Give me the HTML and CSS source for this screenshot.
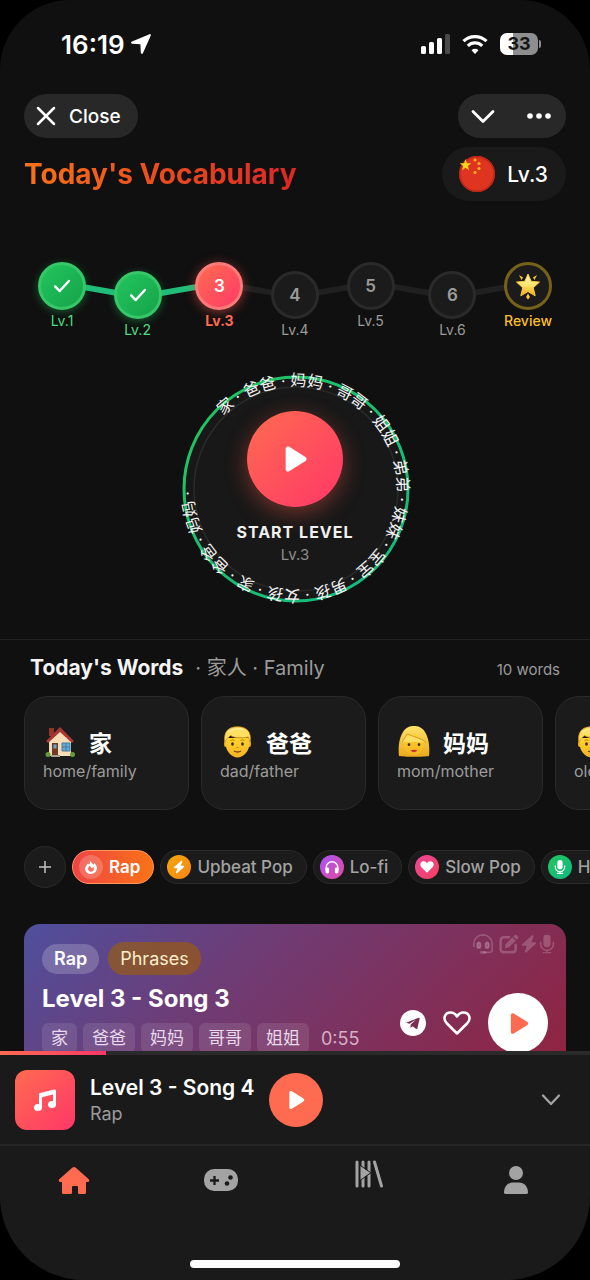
FILE: index.html
```
<!DOCTYPE html>
<html lang="en">

<head>
    <meta charset="utf-8">
    <title>Today's Vocabulary</title>
    <meta name="viewport" content="width=device-width, initial-scale=1">
    <link rel="stylesheet" href="styles.css">
</head>

<body>
    <!-- shared shapes -->
    <svg class="defs" width="0" height="0" aria-hidden="true">
        <defs>
            <linearGradient id="hair" x1="0" y1="0" x2="0" y2="1">
                <stop offset="0" stop-color="#ffe268" />
                <stop offset="1" stop-color="#e9a91c" />
            </linearGradient>
            <linearGradient id="skin" x1="0" y1="0" x2="0" y2="1">
                <stop offset="0" stop-color="#ffd42e" />
                <stop offset="1" stop-color="#f5b324" />
            </linearGradient>
            <linearGradient id="gold" x1="0" y1="0" x2="0" y2="1">
                <stop offset="0" stop-color="#fffce0" />
                <stop offset="0.5" stop-color="#ffe56b" />
                <stop offset="1" stop-color="#f7a51c" />
            </linearGradient>
            <symbol id="play" viewBox="0 0 24 24">
                <path d="M4 3.2v17.6c0 1.6 1.6 2.5 3 1.7l14-8.8c1.3-.8 1.3-2.6 0-3.4L7 1.5C5.600.7 4 1.600 4 3.200z" fill="currentColor" />
            </symbol>
            <symbol id="check" viewBox="0 0 24 24">
                <path d="M4.500 12.500l5 5 10-11" fill="none" stroke="currentColor" stroke-width="2.600" stroke-linecap="round" stroke-linejoin="round" />
            </symbol>
            <symbol id="bolt" viewBox="0 0 24 24">
                <path d="M15.500 1.500L3.500 12.200c-.9.8-.4 2.100.8 2.100h4.900L7 21c-.4 1.400 1 2.200 2 1.300l11.600-10.500c.9-.8.4-2.100-.8-2.100h-4.700l2.500-6.800c.5-1.500-1-2.400-2.100-1.400z" fill="currentColor" />
            </symbol>
            <symbol id="mic" viewBox="0 0 24 24">
                <rect x="7.500" y="0" width="9" height="16" rx="4.500" fill="currentColor" />
                <path d="M4 10v2a8 8 0 0 0 16 0v-2M12 20v3M7.500 23h9" fill="none" stroke="currentColor" stroke-width="2" stroke-linecap="round" />
            </symbol>
            <symbol id="man" viewBox="0 0 34 32">
                <ellipse cx="5.500" cy="18" rx="1.500" ry="3" fill="#eba724" />
                <ellipse cx="29.500" cy="18" rx="1.500" ry="3" fill="#eba724" />
                <path d="M5.500 12h24v5c0 8-6 14.500-12 14.500S5.500 25 5.500 17z" fill="url(#skin)" />
                <path d="M4.800 16C3.500 6 8 .8 17.500.8S31.500 6 30.200 16c-.8-1.500-1.500-3-1.700-5-7 1.500-14 1-18-1.500-2 1.500-4 3.500-5.700 6.500z" fill="#ffe062" stroke="#d9941d" stroke-width="0.8" />
                <path d="M9 6c4-3.500 11-4 15-2" fill="none" stroke="#fff2a0" stroke-width="1.200" />
                <path d="M10.500 14.500q2-1.500 4 0M20.500 14.500q2-1.500 4 0" fill="none" stroke="#b57d17" />
                <ellipse cx="12.500" cy="18" rx="1.400" ry="1.800" fill="#43301a" />
                <ellipse cx="22.500" cy="18" rx="1.400" ry="1.800" fill="#43301a" />
                <path d="M16.500 21.500h2" stroke="#d28c1b" />
                <path d="M14 25q3.500 2 7 0" fill="none" stroke="#74431a" stroke-width="1.400" />
            </symbol>
        </defs>
    </svg>

    <div id="app">
        <div class="status">
            <div class="clock">
                16:19
                <svg width="20" height="20" viewBox="0 0 20 20">
                    <path d="M18.500.2L1 7.600c-1.400.6-1.200 2 .2 2.100l8.200.5.400 8.500c.1 1.400 1.700 1.600 2.200.3L19.700 1.700c.4-1-.2-1.900-1.200-1.500z" fill="#fff" />
                </svg>
            </div>
            <div class="signals">
                <svg width="29" height="20" viewBox="0 0 29 20" fill="#fff">
                    <rect x="0" y="12" width="5" height="8" rx="1.500" />
                    <rect x="8" y="8" width="5" height="12" rx="1.500" />
                    <rect x="16" y="4" width="5" height="16" rx="1.500" />
                    <rect x="24" y="0" width="5" height="20" rx="1.500" fill="#4a4a4a" />
                </svg>
                <svg width="26" height="20" viewBox="0 0 26 20" fill="none" stroke="#fff" stroke-width="3.200">
                    <path d="M1.500 7.200a16.500 16.500 0 0 1 23 0" />
                    <path d="M5.800 11.800a10.400 10.400 0 0 1 14.400 0" />
                    <path d="M13 20l-3.500-3.700a5 5 0 0 1 7 0z" fill="#fff" stroke="none" />
                </svg>
                <div class="battery"><span>33</span></div>
            </div>
        </div>

        <div class="topbar">
            <button class="close">
                <svg width="20" height="20" viewBox="0 0 20 20">
                    <path d="M2 2l16 16M18 2L2 18" stroke="#fff" stroke-width="2.500" stroke-linecap="round" />
                </svg>
                Close
            </button>
            <div class="tools">
                <button aria-label="Minimize">
                    <svg width="24" height="24" viewBox="0 0 24 24">
                        <path d="M2 7.500l10 10 10-10" fill="none" stroke="#fff" stroke-width="2.800" stroke-linecap="round" stroke-linejoin="round" />
                    </svg>
                </button>
                <button aria-label="More">
                    <svg width="24" height="24" viewBox="0 0 24 24" fill="#fff">
                        <circle cx="3" cy="12" r="2.800" />
                        <circle cx="12" cy="12" r="2.800" />
                        <circle cx="21" cy="12" r="2.800" />
                    </svg>
                </button>
            </div>
        </div>

        <header class="heading">
            <h1>Today's Vocabulary</h1>
            <button class="language">
                <svg width="38" height="38" viewBox="0 0 38 38">
                    <circle cx="19" cy="19" r="18" fill="#df3420" />
                    <circle cx="19" cy="19" r="17.200" fill="none" stroke="#b92617" stroke-width="1.500" />
                    <path d="M7.500 4l1.500 4.200 4.300.1-3.400 2.700 1.200 4.200L7.500 12.800 4 15.200l1.200-4.200-3.400-2.700 4.300-.1z" fill="#ffd51d" />
                    <g fill="#ffb91d">
                        <circle cx="17" cy="5" r="1.500" />
                        <circle cx="21" cy="8.500" r="1.500" />
                        <circle cx="21" cy="13.500" r="1.500" />
                        <circle cx="17" cy="17.500" r="1.500" />
                    </g>
                </svg>
                Lv.3
            </button>
        </header>

        <main>
            <div class="levels">
                <div class="level done">
                    <div class="node"><svg width="22" height="22"><use href="#check" /></svg></div>
                    <span>Lv.1</span>
                </div>
                <i class="link down done"></i>
                <div class="level low done">
                    <div class="node"><svg width="22" height="22"><use href="#check" /></svg></div>
                    <span>Lv.2</span>
                </div>
                <i class="link up done wide"></i>
                <div class="level current">
                    <div class="node">3</div>
                    <span>Lv.3</span>
                </div>
                <i class="link down"></i>
                <div class="level low">
                    <div class="node">4</div>
                    <span>Lv.4</span>
                </div>
                <i class="link up"></i>
                <div class="level">
                    <div class="node">5</div>
                    <span>Lv.5</span>
                </div>
                <i class="link down wide"></i>
                <div class="level low">
                    <div class="node">6</div>
                    <span>Lv.6</span>
                </div>
                <i class="link up"></i>
                <div class="level review">
                    <div class="node">
                        <svg width="26" height="28" viewBox="0 0 26 28" fill="url(#gold)">
                            <path d="M13 2l3.200 7.300 8.300.8-6.200 5.600 1.900 8.100L13 19.600l-7.200 4.200 1.900-8.100L1.500 10.100l8.300-.8z" stroke="#f8c63a" stroke-linejoin="round" />
                            <path d="M4 3l4 2.500L6.500 8zM22 3l-4 2.500L19.500 8zM13 21.500l2 3.500-2 2.500-2-2.500z" fill="#ffc832" />
                        </svg>
                    </div>
                    <span>Review</span>
                </div>
            </div>

            <div class="start">
                <svg class="ring" width="250" height="250" viewBox="0 0 250 250">
                    <defs>
                        <path id="orbit" d="M125 227A102 102 0 0 1 125 23A102 102 0 0 1 125 227A102 102 0 0 1 125 23" />
                        <linearGradient id="ringStroke" x1="0" y1="0" x2="1" y2="1">
                            <stop offset="0" stop-color="#22c55e" />
                            <stop offset="1" stop-color="#14b882" />
                        </linearGradient>
                    </defs>
                    <circle cx="126" cy="126" r="112" fill="#181818" stroke="url(#ringStroke)" stroke-width="3" />
                    <circle cx="126" cy="126" r="102" fill="none" stroke="#292b2b" stroke-width="1.500" />
                    <text>
                        <textPath href="#orbit" startOffset="240">家 · 爸爸 · 妈妈 · 哥哥 · 姐姐 · 弟弟 · 妹妹 · 宝宝 · 男孩 · 女孩 · 家 · 爸爸 · 妈妈 ·</textPath>
                    </text>
                </svg>
                <div class="start-inner">
                    <button aria-label="Start level"><svg width="28" height="28"><use href="#play" /></svg></button>
                    <strong>START LEVEL</strong>
                    <span>Lv.3</span>
                </div>
            </div>

            <section class="words">
                <div class="words-head">
                    <h2>Today's Words</h2>
                    <span class="topic">· 家人 · Family</span>
                    <span class="count">10 words</span>
                </div>
                <div class="word-list">
                    <article>
                        <div>
                            <svg width="34" height="32" viewBox="-1 0 34 32">
                                <path d="M5 2h5v8H5z" fill="#96352c" />
                                <path d="M5 14L16 4l11 10v16H5z" fill="#f5deb7" />
                                <path d="M2 15L16 1l14 14-2 2L16 6 4 17z" fill="#a83632" />
                                <path d="M8 17h6v13H8z" fill="#6f3c28" />
                                <path d="M9.500 18.500h3v4h-3zM18 17h8v8h-8z" fill="#6aa8d4" />
                                <path d="M18 17h8v8h-8zM22 17v8M18 21h8" fill="none" stroke="#437ba5" />
                                <path d="M7 30h9" stroke="#aaa195" stroke-width="2" />
                                <circle cx="4" cy="28.500" r="2.500" fill="#679b3e" />
                                <circle cx="28.500" cy="28.500" r="2.500" fill="#679b3e" />
                            </svg>
                            <b lang="zh">家</b>
                        </div>
                        <p>home/family</p>
                    </article>
                    <article>
                        <div>
                            <svg width="34" height="32"><use href="#man" /></svg>
                            <b lang="zh">爸爸</b>
                        </div>
                        <p>dad/father</p>
                    </article>
                    <article>
                        <div>
                            <svg width="34" height="32" viewBox="-1 0 34 32">
                                <path d="M1 30c-1-8 0-18 4-24C8 1 12 0 16 0s8 1 11 6c4 6 5 16 4 24-5 1-25 1-30 0z" fill="url(#hair)" />
                                <path d="M5 15c5 0 10-4 12-8 2 4 6 7 10 8 0 9-5 14-11 14S5 24 5 15z" fill="url(#skin)" />
                                <path d="M8 15.500q2-1.500 4 0M20 15.500q2-1.500 4 0" fill="none" stroke="#b57d17" />
                                <ellipse cx="11" cy="18.500" rx="1.300" ry="1.600" fill="#43301a" />
                                <ellipse cx="21" cy="18.500" rx="1.300" ry="1.600" fill="#43301a" />
                                <path d="M12.500 24.500q3.500-1.500 7 0-3.500 3.500-7 0z" fill="#c7322c" />
                                <path d="M4 16C6 13 7 12 9 8c5 2 13 4 19 8" fill="#ffdf60" stroke="#d7981d" />
                            </svg>
                            <b lang="zh">妈妈</b>
                        </div>
                        <p>mom/mother</p>
                    </article>
                    <article>
                        <div>
                            <svg width="34" height="32"><use href="#man" /></svg>
                            <b lang="zh">哥哥</b>
                        </div>
                        <p>older brother</p>
                    </article>
                </div>
            </section>

            <div class="genres">
                <button class="add" aria-label="Add genre">
                    <svg width="14" height="14" viewBox="0 0 14 14"><path d="M7 1v12M1 7h12" stroke="#c4c4c4" stroke-width="1.500" /></svg>
                </button>
                <button class="genre active">
                    <i>
                        <svg width="14" height="14" viewBox="0 0 24 24">
                            <path fill-rule="evenodd" d="M10 0c1 4 4 5 6 8l2-3c3 3 5 7 4 11-1 5-5 8-10 8S2 21 2 15c0-4 3-7 5-9l2 2c2-3 1-6 1-8zm2 20c3 0 5-2 5-5l-1-3-3 2-3-4c-2 2-3 3-3 5 0 3 2 5 5 5z" fill="#fff" />
                        </svg>
                    </i>
                    Rap
                </button>
                <button class="genre upbeat"><i><svg width="14" height="14"><use href="#bolt" /></svg></i>Upbeat Pop</button>
                <button class="genre lofi">
                    <i>
                        <svg width="14" height="14" viewBox="0 0 24 24">
                            <path d="M2 18v-5a10 10 0 0 1 20 0v5" fill="none" stroke="#fff" stroke-width="2.500" />
                            <rect x="1" y="13" width="6" height="10" rx="2.500" fill="#fff" />
                            <rect x="17" y="13" width="6" height="10" rx="2.500" fill="#fff" />
                        </svg>
                    </i>
                    Lo-fi
                </button>
                <button class="genre slow">
                    <i>
                        <svg width="14" height="14" viewBox="0 0 24 24">
                            <path d="M12 22L2 12C-1 8 1 2 6 2c3 0 5 1.500 6 3.500C13 3.500 15 2 18 2c5 0 7 6 4 10z" fill="#fff" />
                        </svg>
                    </i>
                    Slow Pop
                </button>
                <button class="genre hiphop"><i><svg width="14" height="14"><use href="#mic" /></svg></i>Hip Hop</button>
            </div>

            <article class="song">
                <div class="features">
                    <svg width="20" height="20" viewBox="0 0 24 24" fill="none" stroke="currentColor" stroke-width="2">
                        <path d="M1 15v-3a11 11 0 0 1 22 0v7q0 3-3 3h-7" stroke-linecap="round" />
                        <rect x="5" y="10" width="4" height="7" rx="2" fill="currentColor" />
                        <rect x="15" y="10" width="4" height="7" rx="2" fill="currentColor" />
                        <path d="M10 22h4" stroke-width="3.500" stroke-linecap="round" />
                    </svg>
                    <svg width="20" height="20" viewBox="0 0 24 24">
                        <path d="M12 4H6Q2 4 2 8v10q0 4 4 4h10q4 0 4-4v-5" fill="none" stroke="currentColor" stroke-width="3" stroke-linecap="round" />
                        <path d="M7 17l1-5 8-8 4 4-8 8zM17 3l1.500-1.500q1.500-1.500 3 0l1 1q1.500 1.500 0 3L21 7z" fill="currentColor" />
                    </svg>
                    <svg width="16" height="20" viewBox="2 0 20 24"><use href="#bolt" width="24" height="24" /></svg>
                    <svg width="16" height="20" viewBox="2 0 20 24"><use href="#mic" width="24" height="24" /></svg>
                </div>
                <div class="song-info">
                    <div class="tags">
                        <span class="tag">Rap</span>
                        <span class="tag phrases">Phrases</span>
                    </div>
                    <h3>Level 3 - Song 3</h3>
                    <div class="song-words">
                        <span>家</span>
                        <span>爸爸</span>
                        <span>妈妈</span>
                        <span>哥哥</span>
                        <span>姐姐</span>
                        <time>0:55</time>
                    </div>
                </div>
                <div class="song-actions">
                    <button aria-label="Share">
                        <svg width="26" height="26" viewBox="0 0 26 26">
                            <circle cx="13" cy="13" r="13" fill="#fff" />
                            <path d="M5.500 13l13-5.200c.9-.3 1.300.1 1.100 1l-2.200 9.500c-.2.800-.8 1-1.500.5l-3.300-2.500-1.700 1.500-.5-.2.300-3.100 5.500-5-6.700 4.300-4-1.200z" fill="#7a2d50" />
                        </svg>
                    </button>
                    <button aria-label="Like">
                        <svg width="28" height="28" viewBox="0 0 28 28">
                            <path d="M14 24.500L3.500 14C-.5 9.500 2 3.500 7.500 3.500c3 0 5 1.500 6.500 4 1.500-2.500 3.500-4 6.500-4 5.500 0 8 6 4 10.500z" fill="none" stroke="#fff" stroke-width="2.500" stroke-linejoin="round" />
                        </svg>
                    </button>
                    <button class="song-play" aria-label="Play"><svg width="23" height="23"><use href="#play" /></svg></button>
                </div>
            </article>
        </main>

        <footer>
            <div class="progress"><div></div></div>
            <div class="player">
                <div class="cover">
                    <svg width="24" height="24" viewBox="0 0 24 24">
                        <path d="M7.500 19V6.500L21.500 3v13.500M7.500 8l14-3.500" fill="none" stroke="#fff" stroke-width="3" stroke-linejoin="round" />
                        <ellipse cx="5" cy="19.500" rx="4" ry="3.500" fill="#fff" />
                        <ellipse cx="19" cy="16.500" rx="4" ry="3.500" fill="#fff" />
                    </svg>
                </div>
                <div class="track">
                    <strong>Level 3 - Song 4</strong>
                    <span>Rap</span>
                </div>
                <button class="player-play" aria-label="Play"><svg width="20" height="20"><use href="#play" /></svg></button>
                <button class="collapse" aria-label="Expand player">
                    <svg width="20" height="20" viewBox="0 0 20 20">
                        <path d="M2 5.500l8 8.500 8-8.500" fill="none" stroke="#a3a3a3" stroke-width="2.300" stroke-linecap="round" stroke-linejoin="round" />
                    </svg>
                </button>
            </div>
            <nav>
                <a href="#home" class="active" aria-label="Home">
                    <svg width="32" height="32" viewBox="0 0 32 32">
                        <path d="M14.500 3.500q1.500-1.200 3 0l13 11.500c1.500 1.500.5 3-1 3h-1.500v10.500q0 1.500-1.500 1.500h-5q-1.500 0-1.500-1.500V23q0-1-1-1h-4q-1 0-1 1v5.500Q14 30 12.500 30h-7Q4 30 4 28.500V18H2.500c-1.500 0-2.500-1.500-1-3z" fill="currentColor" />
                    </svg>
                </a>
                <a href="#games" aria-label="Games">
                    <svg width="34" height="24" viewBox="0 0 34 24">
                        <rect width="34" height="22" y="1" rx="10" fill="currentColor" />
                        <path d="M6 12.500h9M10.500 8v9" stroke="#1a1a1a" stroke-width="2.300" />
                        <circle cx="26.500" cy="9.500" r="2.300" fill="#1a1a1a" />
                        <circle cx="23" cy="15.500" r="2.300" fill="#1a1a1a" />
                    </svg>
                </a>
                <a href="#library" class="library" aria-label="Library">
                    <svg width="28" height="28" viewBox="0 0 28 28" stroke="currentColor" stroke-width="3" stroke-linecap="round">
                        <path d="M2 2v24M8 2v24M14 2v24M19.500 2L26.500 26" />
                        <path d="M5 5.500v15L15.500 13z" fill="currentColor" stroke="#1a1a1a" stroke-width="1" />
                    </svg>
                </a>
                <a href="#profile" aria-label="Profile">
                    <svg width="26" height="32" viewBox="0 0 26 32" fill="currentColor">
                        <circle cx="13" cy="9" r="7" />
                        <path d="M1 28.500c0-6 4-10 9-10h6c5 0 9 4 9 10q0 1.500-2 1.500H3q-2 0-2-1.500z" />
                    </svg>
                </a>
            </nav>
            <div class="home-bar"></div>
        </footer>
    </div>
</body>

</html>
```
FILE: styles.css
```
* {
    box-sizing: border-box;
}

html,
body {
    margin: 0;
    padding: 0;
    height: 100%;
    background-color: #000;
}

body {
    font-family: Inter, "Noto Sans CJK SC", sans-serif;
    color: #fff;
}

button {
    display: flex;
    align-items: center;
    justify-content: center;
    padding: 0;
    border: none;
    background: none;
    color: inherit;
    font-family: inherit;
    font-size: inherit;
    cursor: pointer;
}

h1,
h2,
h3,
p {
    margin: 0;
}

svg {
    display: block;
    flex: none;
}

.defs {
    position: absolute;
}

#app {
    display: flex;
    flex-direction: column;
    height: 100vh;
    overflow: hidden;
    border-radius: 70px 70px 84px 84px;
    background-color: #101010;
}

/* phone status bar */
.status {
    display: flex;
    flex: none;
    justify-content: space-between;
    align-items: center;
    height: 88px;
    padding: 0 52px 0 61px;
}

.clock {
    display: flex;
    align-items: center;
    gap: 6px;
    font-size: 26px;
    font-weight: 600;
}

.signals {
    display: flex;
    align-items: center;
    gap: 12px;
}

.battery {
    position: relative;
    width: 38px;
    height: 22px;
    border-radius: 7px;
    background: linear-gradient(to right, #fff 33%, #8e8e8e 33%);
    color: #151515;
    font-size: 18px;
    font-weight: 700;
    line-height: 22px;
    text-align: center;
}

.battery::after {
    content: "";
    position: absolute;
    top: 7px;
    right: -3px;
    width: 2px;
    height: 8px;
    border-radius: 0 2px 2px 0;
    background-color: #8e8e8e;
}

.topbar {
    display: flex;
    flex: none;
    justify-content: space-between;
    padding: 6px 24px 9px;
}

.close,
.tools {
    height: 44px;
    border-radius: 22px;
    background-color: #282828;
}

.close {
    gap: 13px;
    padding: 0 17px 0 12px;
    font-size: 19px;
    font-weight: 500;
}

.tools {
    display: flex;
    gap: 32px;
    padding: 0 15px 0 13px;
}

.heading {
    display: flex;
    flex: none;
    justify-content: space-between;
    align-items: center;
    padding: 0 24px;
}

h1 {
    background: linear-gradient(to right, #f97316, #dc2626);
    background-clip: text;
    -webkit-background-clip: text;
    color: transparent;
    font-size: 28px;
    font-weight: 700;
}

.language {
    gap: 11px;
    height: 54px;
    padding: 0 18px 0 16px;
    border-radius: 27px;
    background-color: #1a1a1a;
    font-size: 21px;
    font-weight: 500;
}

main {
    flex: 1 1 0;
    min-height: 0;
    overflow: hidden;
}

/* level path */
.levels {
    display: flex;
    padding: 61px 38px 0;
}

.level {
    display: flex;
    flex: none;
    flex-direction: column;
    align-items: center;
    gap: 3px;
    width: 48px;
    color: #9b9b9b;
    font-size: 14px;
    line-height: 16px;
}

.level.low {
    margin-top: 9px;
}

.node {
    display: flex;
    align-items: center;
    justify-content: center;
    position: relative;
    z-index: 1;
    width: 48px;
    height: 48px;
    border: 3px solid #2a2a2a;
    border-radius: 50%;
    background-color: #1b1b1b;
    font-size: 17px;
    font-weight: 600;
}

.level.done {
    color: #4ade80;
}

.level.done .node {
    border-color: #36c768;
    background: linear-gradient(135deg, #22c55e, #16a34a);
    box-shadow: 0 2px 9px rgba(34, 197, 94, 0.4);
    color: #fff;
}

.level.current {
    color: #ff6b50;
    font-weight: 700;
}

.level.current .node {
    border-color: #ff7a78;
    background: linear-gradient(135deg, #ff6b50, #ff3b68);
    box-shadow: 0 2px 11px rgba(255, 90, 80, 0.5);
    color: #fff;
}

.level.review {
    color: #fbbf24;
    font-weight: 500;
}

.level.review .node {
    border-color: #75611a;
}

.link {
    flex: 28 1 0;
    height: 6px;
    margin: 25px -4px 0;
    background-color: #202020;
}

.link.wide {
    flex-grow: 33;
}

.link.done {
    background-color: #20bd79;
}

.link.down {
    transform: rotate(10deg);
}

.link.up {
    transform: rotate(-10deg);
}

/* start button with the words running round it */
.start {
    display: grid;
    justify-content: center;
    padding-top: 25px;
    margin-bottom: 26px;
}

.start>* {
    grid-area: 1 / 1;
}

.ring text {
    fill: #f4f4f4;
    font-family: Inter, "Noto Sans CJK SC", sans-serif;
    font-size: 16px;
}

.start-inner {
    display: flex;
    flex-direction: column;
    align-items: center;
    padding-top: 48px;
}

.start-inner button {
    width: 96px;
    height: 96px;
    border-radius: 50%;
    background: linear-gradient(135deg, #ff6b50, #ff3768);
    box-shadow: 0 6px 22px rgba(255, 90, 70, 0.4);
}

.start-inner strong {
    margin-top: 14px;
    color: #f0f0f0;
    font-size: 16px;
    font-weight: 700;
    letter-spacing: 1px;
    line-height: 22px;
}

.start-inner span {
    margin-top: 2px;
    color: #8d8d8d;
    font-size: 15px;
    line-height: 20px;
}

/* words of the day */
.words {
    padding-top: 14px;
    border-top: 1px solid #222;
}

.words-head {
    display: flex;
    align-items: baseline;
    gap: 12px;
    padding: 0 30px;
    margin-bottom: 12px;
    color: #9b9b9b;
    line-height: 28px;
}

h2 {
    color: #f4f4f4;
    font-size: 21px;
    font-weight: 700;
}

.topic {
    font-size: 20px;
}

.count {
    margin-left: auto;
    font-size: 15px;
}

.word-list {
    display: flex;
    gap: 12px;
    padding-left: 24px;
}

.word-list article {
    flex: none;
    width: 165px;
    height: 114px;
    padding: 28px 18px;
    border: 1px solid #2a2a2a;
    border-radius: 24px;
    background-color: #1b1b1b;
}

.word-list div {
    display: flex;
    align-items: center;
    gap: 12px;
    height: 34px;
}

.word-list b {
    font-family: "Noto Sans CJK SC", sans-serif;
    font-size: 23px;
    line-height: 34px;
}

.word-list p {
    color: #9b9b9b;
    font-size: 16px;
    line-height: 24px;
    white-space: nowrap;
}

/* genre chips */
.genres {
    display: flex;
    align-items: center;
    gap: 6px;
    padding: 36px 0 36px 24px;
}

.add {
    flex: none;
    width: 42px;
    height: 42px;
    border: 1px solid #2a2a2a;
    border-radius: 50%;
    background-color: #1b1b1b;
}

.genre {
    flex: none;
    gap: 6px;
    height: 34px;
    padding: 0 13px 0 6px;
    border: 1px solid #2a2a2a;
    border-radius: 17px;
    background-color: #1b1b1b;
    color: #a3a3a3;
    font-size: 17px;
    font-weight: 500;
    white-space: nowrap;
}

.genre i {
    display: flex;
    align-items: center;
    justify-content: center;
    width: 24px;
    height: 24px;
    border-radius: 50%;
    color: #fff;
}

.genre.active {
    border-color: #ff9560;
    background: linear-gradient(to right, #ef4444, #f97316);
    color: #fff;
    font-weight: 600;
}

.active i {
    background-color: rgba(255, 255, 255, 0.2);
}

.upbeat i {
    background: linear-gradient(135deg, #f5a90b, #f58416);
}

.lofi i {
    background: linear-gradient(135deg, #a855f7, #e34a9e);
}

.slow i {
    background: linear-gradient(135deg, #ec4899, #f43f5e);
}

.hiphop i {
    background: linear-gradient(135deg, #22c55e, #10b981);
}

/* song card */
.song {
    position: relative;
    display: flex;
    justify-content: space-between;
    margin: 0 24px;
    padding: 18px;
    border-radius: 16px;
    background: linear-gradient(135deg, #4f4f9d, #6d3d77 35%, #91233f);
}

.features {
    position: absolute;
    top: 10px;
    right: 11px;
    display: flex;
    gap: 2px;
    color: rgba(255, 255, 255, 0.2);
}

.features svg:first-child {
    margin-right: 4px;
}

.tags {
    display: flex;
    align-items: center;
    gap: 9px;
}

.tag {
    padding: 0 12px;
    border-radius: 16px;
    background-color: rgba(255, 255, 255, 0.2);
    font-size: 18px;
    font-weight: 600;
    line-height: 30px;
}

.tag.phrases {
    background-color: rgba(160, 95, 0, 0.6);
    color: #fdeecb;
    font-weight: 400;
    line-height: 33px;
}

h3 {
    margin: 8px 0;
    font-size: 24px;
    font-weight: 700;
    line-height: 32px;
}

.song-words {
    display: flex;
    align-items: center;
    gap: 6px;
    color: #e8d9ec;
    font-size: 17px;
}

.song-words span {
    padding: 0 9px;
    border-radius: 6px;
    background-color: rgba(255, 255, 255, 0.1);
    line-height: 30px;
}

.song-words time {
    margin-left: 6px;
    color: #d5afc4;
    font-size: 18px;
}

.song-actions {
    display: flex;
    align-items: center;
    gap: 17px;
    padding-top: 51px;
    align-self: flex-start;
}

.song-play {
    width: 60px;
    height: 60px;
    border-radius: 50%;
    background-color: #fff;
    color: #ff6b50;
}

/* player and tabs */
footer {
    flex: none;
    background-color: #1a1a1a;
}

.progress {
    height: 4px;
    background-color: #2a2a2a;
}

.progress div {
    width: 18%;
    height: 100%;
    background: linear-gradient(to right, #ff6b50, #ff3768);
}

.player {
    display: flex;
    align-items: center;
    gap: 15px;
    padding: 15px;
    height: 89px;
}

.cover {
    display: flex;
    align-items: center;
    justify-content: center;
    width: 60px;
    height: 60px;
    border-radius: 12px;
    background: linear-gradient(135deg, #ff6b50, #ff3768);
}

.track strong {
    display: block;
    font-size: 21px;
    font-weight: 600;
    line-height: 28px;
}

.track span {
    color: #9b9b9b;
    font-size: 18px;
    line-height: 24px;
}

.player-play {
    width: 54px;
    height: 54px;
    border-radius: 50%;
    background-color: #ff6b50;
}

.collapse {
    margin-left: auto;
    padding: 0 14px;
}

nav {
    display: grid;
    grid-template-columns: repeat(4, 1fr);
    justify-items: center;
    align-items: center;
    height: 70px;
    border-top: 2px solid #262626;
}

nav a {
    color: #a3a3a3;
}

nav a.active {
    color: #ff6b50;
}

nav .library {
    padding-bottom: 12px;
}

.home-bar {
    width: 210px;
    height: 8px;
    margin: 46px auto 12px;
    border-radius: 4px;
    background-color: #fff;
}
```
